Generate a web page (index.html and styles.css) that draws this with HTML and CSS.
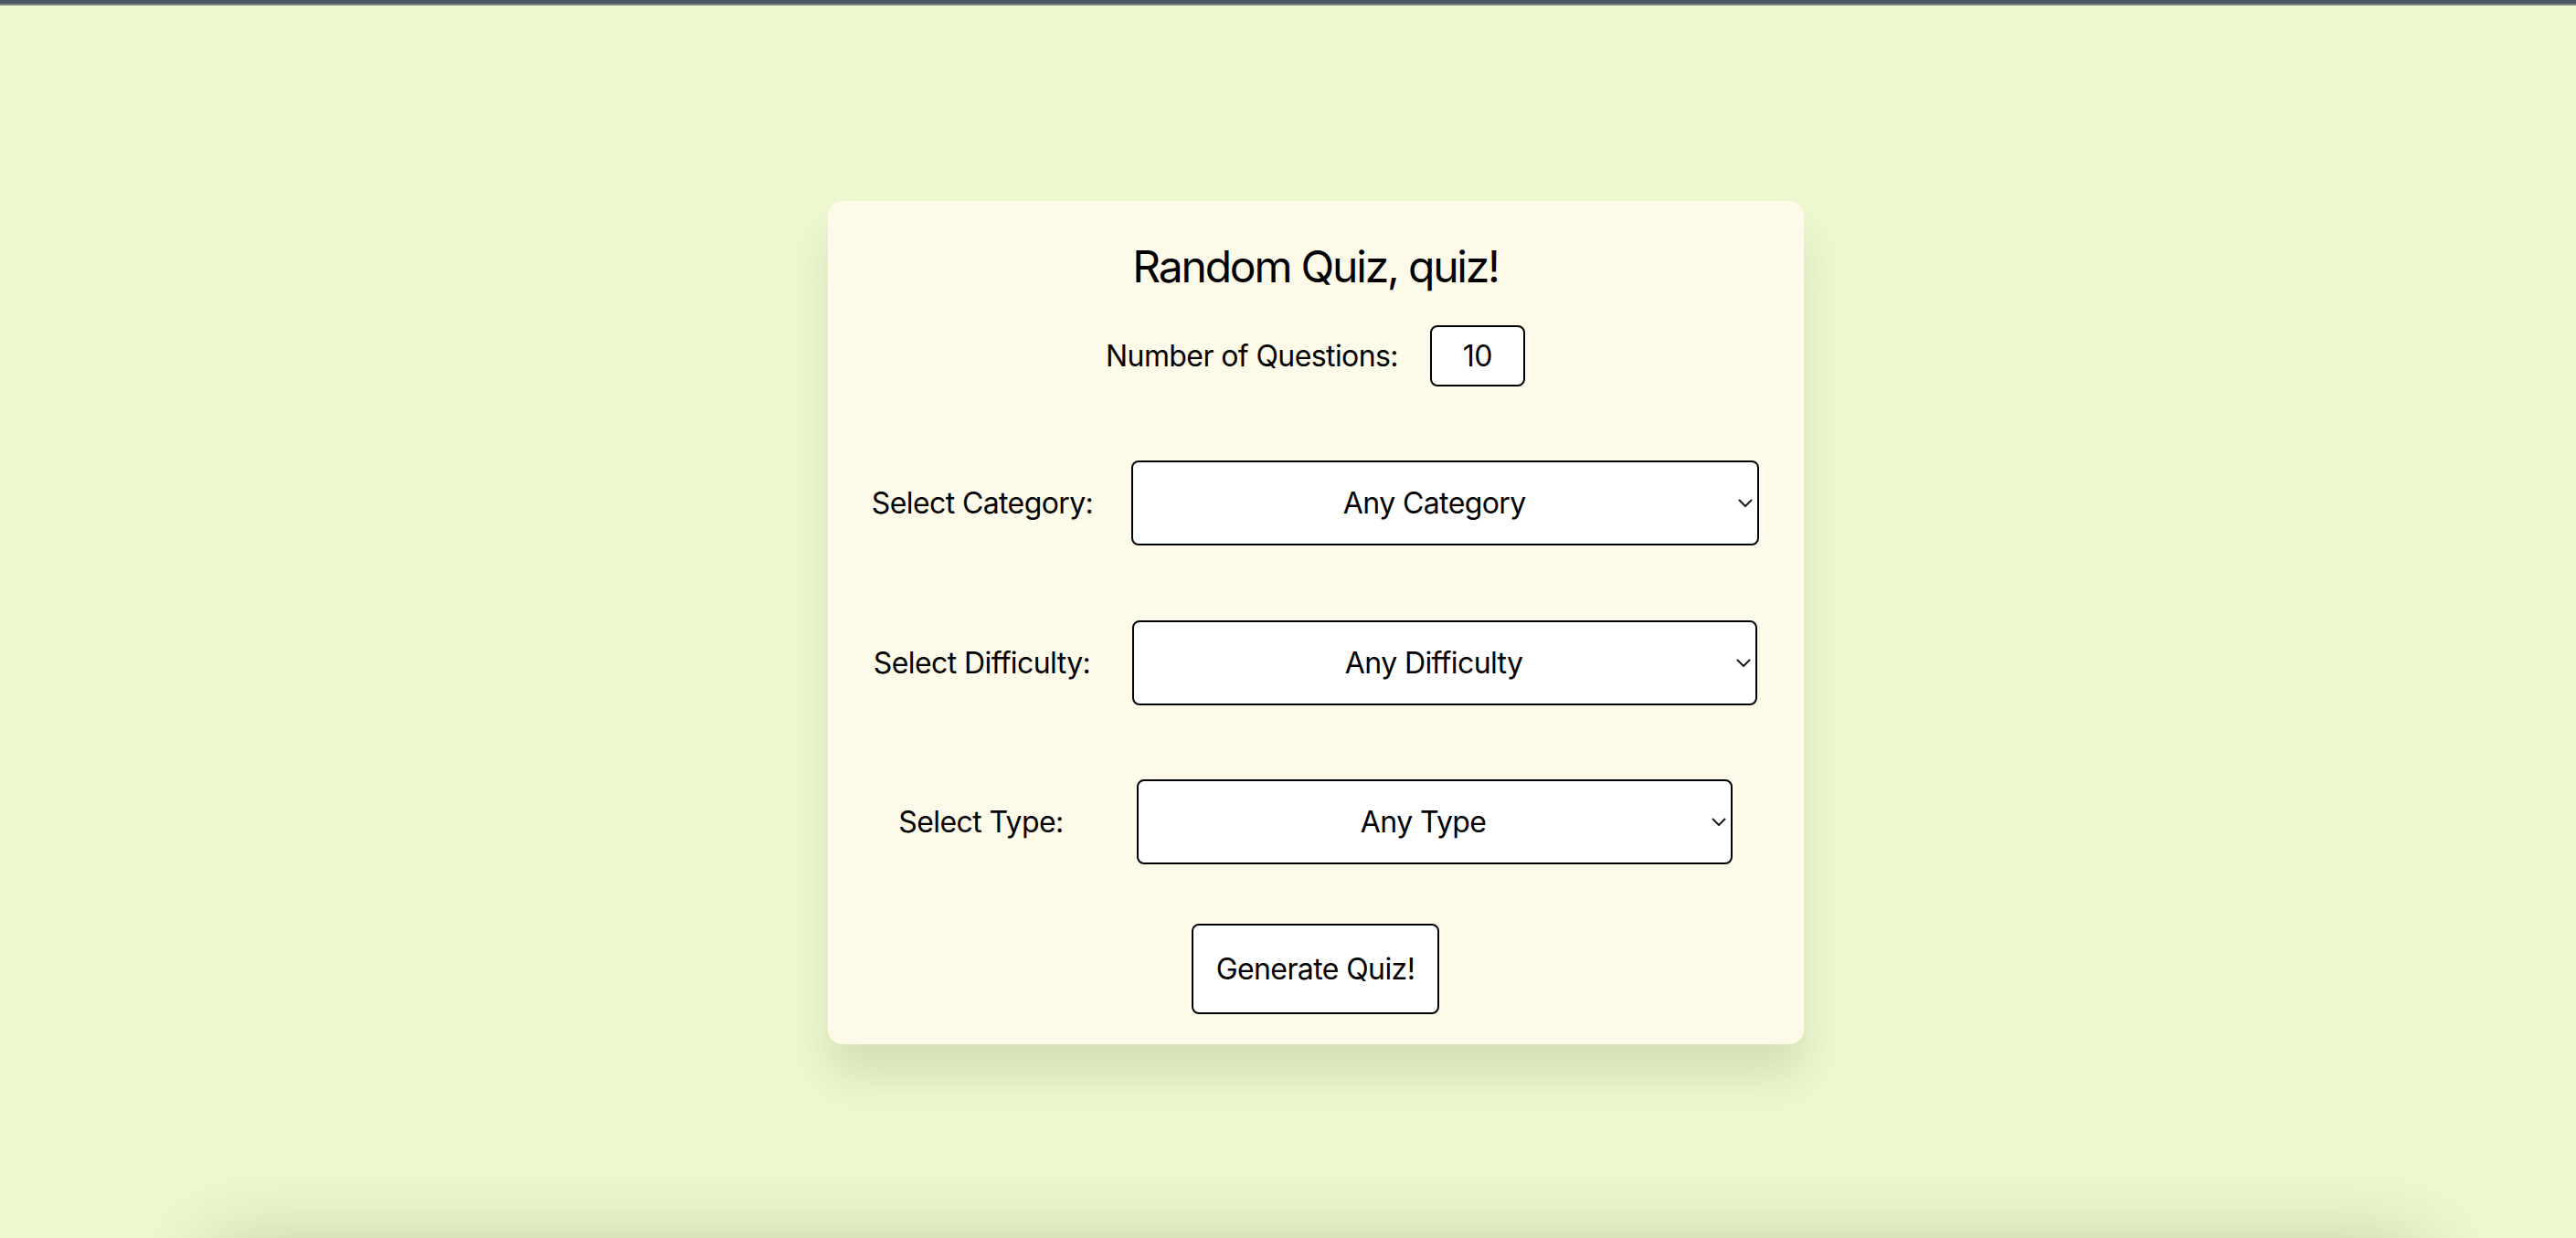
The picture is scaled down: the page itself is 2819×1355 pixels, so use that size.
FILE: index.html
```html
<!DOCTYPE html>
<html lang="en">
<head>
<meta charset="utf-8">
<title>Random Quiz, quiz!</title>
<link rel="stylesheet" href="styles.css">
</head>
<body>
<div class="window-bar"></div>
<main class="page">
  <section class="card">
    <h2 class="title">Random Quiz, quiz!</h2>
    <div class="field-row number-row">
      <label class="field-label" for="amount">Number of Questions:</label>
      <input class="num-input" id="amount" type="text" value="10">
    </div>
    <div class="field-row select-row gap-category">
      <label class="field-label" for="category">Select Category:</label>
      <div class="select-wrap">
        <select class="select select-category" id="category">
          <option>Any Category</option>
        </select>
        <svg class="chevron" viewBox="0 0 16 10" aria-hidden="true"><polyline points="1.5,1.5 8,8 14.5,1.5" fill="none" stroke="#1a1a1a" stroke-width="2" stroke-linecap="round" stroke-linejoin="round"/></svg>
      </div>
    </div>
    <div class="field-row select-row select-row-difficulty gap-difficulty">
      <label class="field-label" for="difficulty">Select Difficulty:</label>
      <div class="select-wrap">
        <select class="select select-difficulty" id="difficulty">
          <option>Any Difficulty</option>
        </select>
        <svg class="chevron" viewBox="0 0 16 10" aria-hidden="true"><polyline points="1.5,1.5 8,8 14.5,1.5" fill="none" stroke="#1a1a1a" stroke-width="2" stroke-linecap="round" stroke-linejoin="round"/></svg>
      </div>
    </div>
    <div class="field-row select-row gap-type">
      <label class="field-label" for="type">Select Type:</label>
      <div class="select-wrap">
        <select class="select select-type" id="type">
          <option>Any Type</option>
        </select>
        <svg class="chevron" viewBox="0 0 16 10" aria-hidden="true"><polyline points="1.5,1.5 8,8 14.5,1.5" fill="none" stroke="#1a1a1a" stroke-width="2" stroke-linecap="round" stroke-linejoin="round"/></svg>
      </div>
    </div>
    <button class="generate" type="button">Generate Quiz!</button>
  </section>
  <section class="below-card"></section>
</main>
</body>
</html>
```

FILE: styles.css
```css
html, body {
  margin: 0;
  height: 100%;
  overflow: hidden;
}

body {
  background: #eef9d1;
  font-family: Inter, "Noto Sans", sans-serif;
  color: #000;
}

.window-bar {
  height: 4px;
  background: #4a5862;
  border-bottom: 2px solid #7c8784;
}

.page {
  display: flex;
  flex-direction: column;
  align-items: center;
  padding-left: 60px;
  padding-top: 214px;
}

.card {
  width: 1068px;
  box-sizing: border-box;
  flex-shrink: 0;
  background: #fefaea;
  border-radius: 16px;
  box-shadow: 0 35px 50px rgba(60, 70, 20, 0.14);
  display: flex;
  flex-direction: column;
  align-items: center;
  padding: 43px 0 33px;
}

.title {
  margin: 0;
  font-size: 48px;
  font-weight: 400;
  letter-spacing: -2.2px;
  line-height: 58px;
}

.field-row {
  display: flex;
  align-items: center;
  justify-content: center;
}

.number-row {
  margin-top: 35px;
  gap: 35px;
}

.field-label {
  font-size: 32px;
  line-height: 39px;
  letter-spacing: -0.6px;
}

.num-input {
  box-sizing: border-box;
  width: 104px;
  height: 67px;
  border: 2px solid #000;
  border-radius: 8px;
  background: #fff;
  font-family: inherit;
  font-size: 32px;
  letter-spacing: -0.6px;
  color: #000;
  text-align: center;
  padding: 0;
  outline: none;
}

.select-row {
  margin-top: 81px;
}

.select-row-difficulty {
  margin-top: 82px;
}

.gap-category { gap: 42px; }
.gap-difficulty { gap: 46px; }
.gap-type { gap: 80px; }

.select-wrap {
  position: relative;
  display: flex;
}

.select {
  -webkit-appearance: none;
  appearance: none;
  box-sizing: border-box;
  height: 93px;
  border: 2px solid #000;
  border-radius: 8px;
  background: #fff;
  font-family: inherit;
  font-size: 32px;
  letter-spacing: -0.6px;
  color: #000;
  text-align: center;
  text-align-last: center;
  padding: 0 24px 0 0;
  outline: none;
}

.select-category { width: 687px; }
.select-difficulty { width: 684px; }
.select-type { width: 652px; }

.chevron {
  position: absolute;
  right: 7px;
  top: 50%;
  margin-top: -5px;
  width: 16px;
  height: 10px;
  pointer-events: none;
}

.generate {
  margin-top: 65px;
  height: 99px;
  padding: 0 25px;
  border: 2px solid #000;
  border-radius: 8px;
  background: #fff;
  font-family: inherit;
  font-size: 32px;
  letter-spacing: -0.6px;
  color: #000;
}

.below-card {
  flex-shrink: 0;
  width: 2430px;
  height: 400px;
  margin-top: 217px;
  background: #fefaea;
  border-radius: 16px;
  box-shadow: 0 0 90px rgba(40, 50, 0, 0.22);
}
```
